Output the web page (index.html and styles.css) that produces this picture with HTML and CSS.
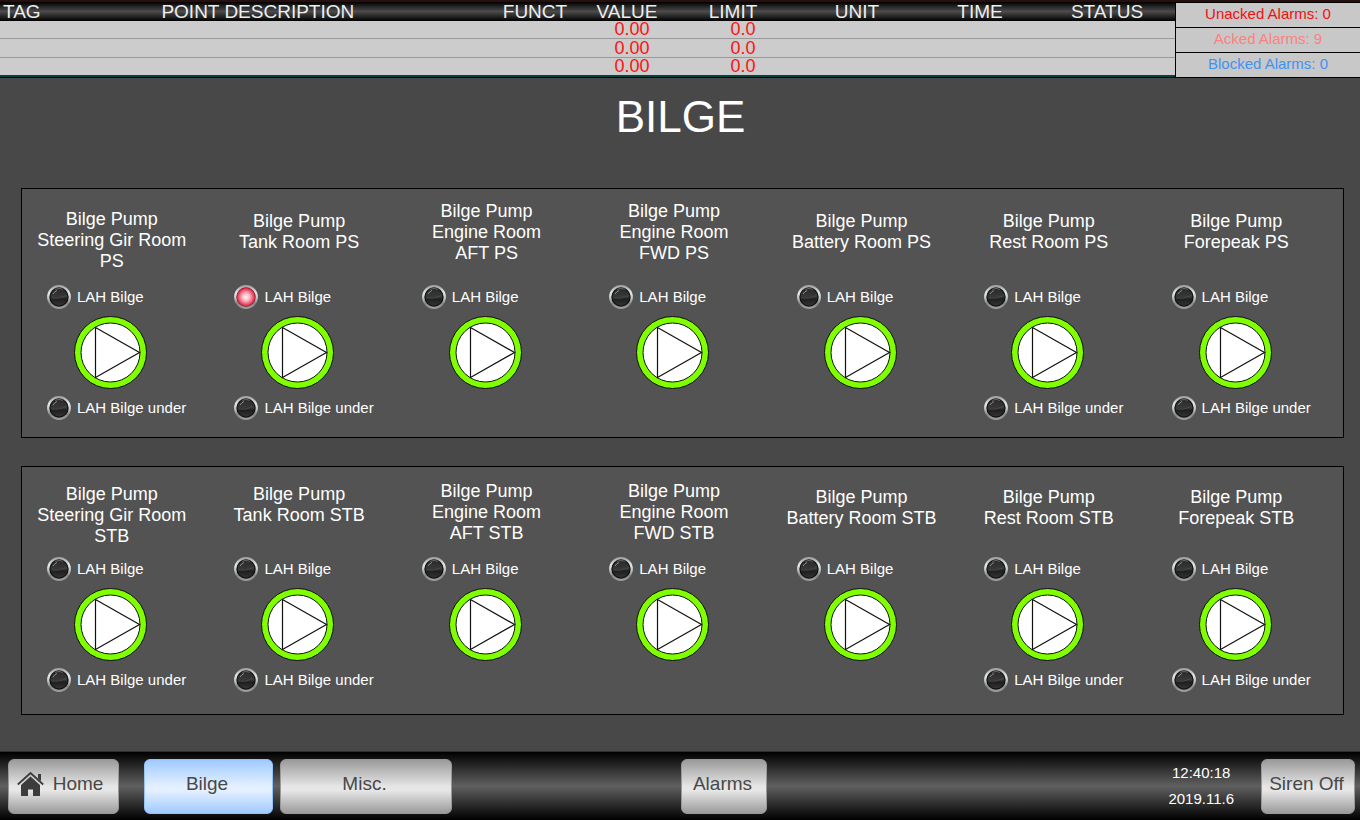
FILE: index.html
```html
<!DOCTYPE html>
<html lang="en">
<head>
  <meta charset="UTF-8">
  <meta name="viewport" content="width=device-width, initial-scale=1.0">
  <title>Bilge</title>
  <link rel="stylesheet" href="styles.css">
</head>
<body>
  <!-- shared symbols -->
  <svg class="defs" aria-hidden="true">
    <defs>
      <linearGradient id="rim" x1="0" y1="0" x2="0" y2="1">
        <stop offset="0" stop-color="#a4a4a4"/>
        <stop offset="0.3" stop-color="#dfe8e8"/>
        <stop offset="0.55" stop-color="#c4c8c8"/>
        <stop offset="0.8" stop-color="#858585"/>
        <stop offset="1" stop-color="#9c9c9c"/>
      </linearGradient>
      <linearGradient id="dark" x1="0" y1="0" x2="0" y2="1">
        <stop offset="0" stop-color="#2a2a2a"/>
        <stop offset="0.5" stop-color="#383838"/>
        <stop offset="0.62" stop-color="#1e1e1e"/>
        <stop offset="1" stop-color="#343434"/>
      </linearGradient>
      <radialGradient id="red" cx="0.5" cy="0.5" r="0.5">
        <stop offset="0" stop-color="#fff0f2"/>
        <stop offset="0.35" stop-color="#fbc4cc"/>
        <stop offset="0.75" stop-color="#ec6078"/>
        <stop offset="1" stop-color="#d01c3c"/>
      </radialGradient>
      <symbol id="lamp-off" viewBox="0 0 24 24">
        <circle cx="12" cy="12" r="10.800" fill="#111" stroke="url(#rim)" stroke-width="2.200"/>
        <circle cx="12" cy="12" r="8.500" fill="url(#dark)"/>
        <path d="M6 9Q7.500 6.500 10 5.500" fill="none" stroke="#8c8c8c" stroke-width="1"/>
        <path d="M8 4.300Q12 2.600 16 4.300" fill="none" stroke="#666" stroke-width="1"/>
        <path d="M4.500 13Q11 14.500 19.500 10.500" fill="none" stroke="#484848" stroke-width="1"/>
      </symbol>
      <symbol id="lamp-on" viewBox="0 0 24 24">
        <circle cx="12" cy="12" r="10.800" fill="#8c1428" stroke="url(#rim)" stroke-width="2.200"/>
        <circle cx="12" cy="12" r="9.200" fill="url(#red)"/>
      </symbol>
      <symbol id="pump" viewBox="0 0 73 73">
        <circle cx="36.5" cy="36.5" r="36" fill="#80ff00" stroke="#111" stroke-width="1"/>
        <circle cx="36.5" cy="36.5" r="29.5" fill="#fff" stroke="#111" stroke-width="1"/>
        <path d="M21.500 11.500V61.500L65.500 36.500Z" fill="none" stroke="#111" stroke-width="1.200"/>
      </symbol>
    </defs>
  </svg>

  <header class="alarm-bar">
    <table class="alarm-list">
      <colgroup>
        <col class="c-tag"><col><col class="c-funct"><col class="c-value"><col class="c-limit"><col class="c-unit"><col class="c-time"><col class="c-status">
      </colgroup>
      <thead>
        <tr><th class="tag">TAG</th><th>POINT DESCRIPTION</th><th>FUNCT</th><th>VALUE</th><th>LIMIT</th><th>UNIT</th><th>TIME</th><th class="status">STATUS</th></tr>
      </thead>
      <tbody>
        <tr><td></td><td></td><td></td><td class="value">0.00</td><td class="limit">0.0</td><td></td><td></td><td></td></tr>
        <tr><td></td><td></td><td></td><td class="value">0.00</td><td class="limit">0.0</td><td></td><td></td><td></td></tr>
        <tr><td></td><td></td><td></td><td class="value">0.00</td><td class="limit">0.0</td><td></td><td></td><td></td></tr>
      </tbody>
    </table>
    <div class="alarm-counts">
      <div class="unacked">Unacked Alarms: 0</div>
      <div class="acked">Acked Alarms: 9</div>
      <div class="blocked">Blocked Alarms: 0</div>
    </div>
  </header>

  <main>
    <h1>BILGE</h1>

    <section class="panel port">
      <div class="unit">
        <h2 class="mid">Bilge Pump<br>Steering Gir Room<br>PS</h2>
        <div class="lamp"><svg><use href="#lamp-off"/></svg>LAH Bilge</div>
        <svg class="pump"><use href="#pump"/></svg>
        <div class="lamp"><svg><use href="#lamp-off"/></svg>LAH Bilge under</div>
      </div>
      <div class="unit">
        <h2>Bilge Pump<br>Tank Room PS</h2>
        <div class="lamp"><svg><use href="#lamp-on"/></svg>LAH Bilge</div>
        <svg class="pump"><use href="#pump"/></svg>
        <div class="lamp"><svg><use href="#lamp-off"/></svg>LAH Bilge under</div>
      </div>
      <div class="unit">
        <h2 class="high">Bilge Pump<br>Engine Room<br>AFT PS</h2>
        <div class="lamp"><svg><use href="#lamp-off"/></svg>LAH Bilge</div>
        <svg class="pump"><use href="#pump"/></svg>
      </div>
      <div class="unit">
        <h2 class="high">Bilge Pump<br>Engine Room<br>FWD PS</h2>
        <div class="lamp"><svg><use href="#lamp-off"/></svg>LAH Bilge</div>
        <svg class="pump"><use href="#pump"/></svg>
      </div>
      <div class="unit">
        <h2>Bilge Pump<br>Battery Room PS</h2>
        <div class="lamp"><svg><use href="#lamp-off"/></svg>LAH Bilge</div>
        <svg class="pump"><use href="#pump"/></svg>
      </div>
      <div class="unit">
        <h2>Bilge Pump<br>Rest Room PS</h2>
        <div class="lamp"><svg><use href="#lamp-off"/></svg>LAH Bilge</div>
        <svg class="pump"><use href="#pump"/></svg>
        <div class="lamp"><svg><use href="#lamp-off"/></svg>LAH Bilge under</div>
      </div>
      <div class="unit">
        <h2>Bilge Pump<br>Forepeak PS</h2>
        <div class="lamp"><svg><use href="#lamp-off"/></svg>LAH Bilge</div>
        <svg class="pump"><use href="#pump"/></svg>
        <div class="lamp"><svg><use href="#lamp-off"/></svg>LAH Bilge under</div>
      </div>
    </section>

    <section class="panel starboard">
      <div class="unit">
        <h2 class="mid">Bilge Pump<br>Steering Gir Room<br>STB</h2>
        <div class="lamp"><svg><use href="#lamp-off"/></svg>LAH Bilge</div>
        <svg class="pump"><use href="#pump"/></svg>
        <div class="lamp"><svg><use href="#lamp-off"/></svg>LAH Bilge under</div>
      </div>
      <div class="unit">
        <h2 class="mid">Bilge Pump<br>Tank Room STB</h2>
        <div class="lamp"><svg><use href="#lamp-off"/></svg>LAH Bilge</div>
        <svg class="pump"><use href="#pump"/></svg>
        <div class="lamp"><svg><use href="#lamp-off"/></svg>LAH Bilge under</div>
      </div>
      <div class="unit">
        <h2 class="high">Bilge Pump<br>Engine Room<br>AFT STB</h2>
        <div class="lamp"><svg><use href="#lamp-off"/></svg>LAH Bilge</div>
        <svg class="pump"><use href="#pump"/></svg>
      </div>
      <div class="unit">
        <h2 class="high">Bilge Pump<br>Engine Room<br>FWD STB</h2>
        <div class="lamp"><svg><use href="#lamp-off"/></svg>LAH Bilge</div>
        <svg class="pump"><use href="#pump"/></svg>
      </div>
      <div class="unit">
        <h2>Bilge Pump<br>Battery Room STB</h2>
        <div class="lamp"><svg><use href="#lamp-off"/></svg>LAH Bilge</div>
        <svg class="pump"><use href="#pump"/></svg>
      </div>
      <div class="unit">
        <h2>Bilge Pump<br>Rest Room STB</h2>
        <div class="lamp"><svg><use href="#lamp-off"/></svg>LAH Bilge</div>
        <svg class="pump"><use href="#pump"/></svg>
        <div class="lamp"><svg><use href="#lamp-off"/></svg>LAH Bilge under</div>
      </div>
      <div class="unit">
        <h2>Bilge Pump<br>Forepeak STB</h2>
        <div class="lamp"><svg><use href="#lamp-off"/></svg>LAH Bilge</div>
        <svg class="pump"><use href="#pump"/></svg>
        <div class="lamp"><svg><use href="#lamp-off"/></svg>LAH Bilge under</div>
      </div>
    </section>
  </main>

  <footer class="nav-bar">
    <button type="button" class="home">
      <svg class="home-icon" viewBox="0 0 27 26"><path d="M13.500 5.500L23 14V24.500Q23 25 22.500 25H16V18.500H11V25H4.500Q4 25 4 24.500V14Z" fill="#3c3c3c"/><path d="M0.800 13.500L13.500 2L26.200 13.500" fill="none" stroke="#3c3c3c" stroke-width="1.800"/><path d="M21 3H24V10L21 7.500Z" fill="#3c3c3c"/></svg>
      Home
    </button>
    <button type="button" class="bilge active">Bilge</button>
    <button type="button" class="misc">Misc.</button>
    <button type="button" class="alarms">Alarms</button>
    <div class="clock">12:40:18<br>2019.11.6</div>
    <button type="button" class="siren">Siren Off</button>
  </footer>
</body>
</html>
```

FILE: styles.css
```css
* {
  box-sizing: border-box;
}
body {
  margin: 0;
  min-height: 100vh;
  display: flex;
  flex-direction: column;
  background-color: #484848;
  color: #fff;
  font-family: 'Liberation Sans', Arial, sans-serif;
}
.defs {
  position: absolute;
  width: 0;
  height: 0;
}

/* alarm bar */
.alarm-bar {
  display: flex;
  border-top: 2px solid #260f0c;
  border-bottom: 1px solid #000;
}
.alarm-list {
  flex: 1;
  table-layout: fixed;
  border-spacing: 0;
  background-color: #ccc;
}
.c-tag { width: 35px; }
.c-funct { width: 120px; }
.c-value { width: 64px; }
.c-limit { width: 148px; }
.c-unit { width: 100px; }
.c-time { width: 146px; }
.c-status { width: 122px; }
.alarm-list thead tr {
  background: linear-gradient(#000, #4c4c4c 50%, #000);
}
.alarm-list th {
  height: 19px;
  padding: 0;
  font-size: 19px;
  line-height: 19px;
  font-weight: normal;
  white-space: nowrap;
  color: #eee;
}
.alarm-list .tag {
  padding-left: 3px;
  text-align: left;
}
.alarm-list .status {
  padding-right: 14px;
}
.alarm-list td {
  height: 19px;
  padding: 0;
  border-bottom: 1px solid #999;
  font-size: 18px;
  line-height: 17px;
  text-align: center;
  color: #f11;
}
.alarm-list tbody tr:first-child td {
  height: 18px;
}
.alarm-list tbody tr:last-child td {
  border-bottom: 2px solid #044;
}
.alarm-list .value {
  padding-left: 10px;
}
.alarm-list .limit {
  padding-left: 20px;
}
.alarm-counts {
  width: 185px;
  display: flex;
  flex-direction: column;
  border-left: 1px solid #000;
  background-color: #c8c8c8;
  font-size: 15px;
  line-height: 22px;
  text-align: center;
}
.alarm-counts div {
  flex: 1;
  border-top: 1px solid #000;
}
.unacked { color: #f01010; }
.acked { color: #ff8080; }
.blocked { color: #3f92f5; }

/* page */
main {
  flex: 1;
  padding: 14px 16px 0 21px;
}
h1 {
  margin: 0 4px 46px 0;
  font-size: 44px;
  line-height: 50px;
  font-weight: normal;
  text-align: center;
}
.panel {
  display: grid;
  grid-template-columns: repeat(7, minmax(0, 1fr));
  column-gap: 26px;
  min-height: 250px;
  margin-bottom: 28px;
  padding: 12px 25px 16px 10px;
  border: 1px solid #000;
  background-color: #535353;
}
.starboard {
  min-height: 249px;
  padding-top: 14px;
}
.unit h2 {
  height: 84px;
  margin: 0;
  padding: 10px 2px 0 0;
  font-size: 18px;
  line-height: 21px;
  font-weight: normal;
  text-align: center;
  white-space: nowrap;
}
.unit .mid {
  padding-top: 8px;
}
.starboard h2 {
  height: 76px;
  padding-top: 6px;
}
.starboard .mid {
  padding-top: 3px;
}
.unit .high {
  padding-top: 0;
}
.lamp {
  display: flex;
  align-items: center;
  gap: 6px;
  margin-left: 15px;
  font-size: 15px;
  line-height: 24px;
  white-space: nowrap;
}
.lamp svg {
  flex: none;
  width: 24px;
  height: 24px;
}
.pump {
  display: block;
  width: 73px;
  height: 73px;
  margin: 7px 0 7px 42px;
}

/* bottom navigation */
.nav-bar {
  display: flex;
  align-items: center;
  height: 69px;
  padding: 0 5px 0 8px;
  border-top: 1px solid #044;
  background: linear-gradient(#000, #606060 50%, #000);
}
button {
  height: 55px;
  padding: 0 3px 4px 0;
  border: 1px solid #999;
  border-radius: 6px;
  background: linear-gradient(#9a9a9a, #e6e6e6 50%, #e6e6e6 58%, #9a9a9a);
  color: #484848;
  font-family: inherit;
  font-size: 19px;
  white-space: nowrap;
  cursor: pointer;
}
button.active {
  border-color: #94c2fb;
  background: linear-gradient(#9fcaff, #e4f0ff 50%, #e4f0ff 58%, #9fcaff);
}
.home {
  display: flex;
  align-items: center;
  justify-content: center;
  gap: 9px;
  width: 111px;
  margin-right: 25px;
  padding-right: 7px;
}
.home-icon {
  width: 27px;
  height: 26px;
}
.bilge {
  width: 129px;
  margin-right: 7px;
}
.misc {
  width: 172px;
}
.alarms {
  width: 86px;
  margin-left: 229px;
}
.clock {
  margin-left: auto;
  margin-right: 27px;
  font-size: 15px;
  line-height: 26px;
  text-align: center;
}
.siren {
  width: 94px;
}
```
